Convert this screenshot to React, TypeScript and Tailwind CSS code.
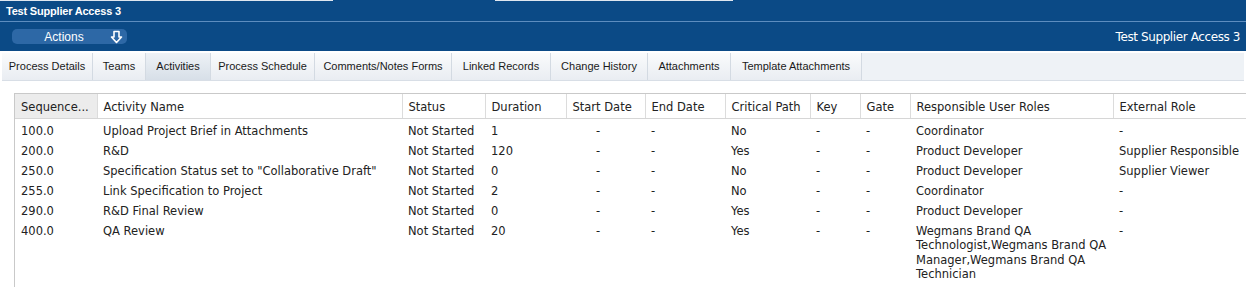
const tabs: [string, number][] = [
  ["Process Details", 91],
  ["Teams", 53],
  ["Activities", 65],
  ["Process Schedule", 104],
  ["Comments/Notes Forms", 137],
  ["Linked Records", 99],
  ["Change History", 97],
  ["Attachments", 83],
  ["Template Attachments", 131],
];

const rows = [
  ["100.0", "Upload Project Brief in Attachments", "Not Started", "1", "-", "-", "No", "-", "-", "Coordinator", "-"],
  ["200.0", "R&D", "Not Started", "120", "-", "-", "Yes", "-", "-", "Product Developer", "Supplier Responsible"],
  ["250.0", 'Specification Status set to "Collaborative Draft"', "Not Started", "0", "-", "-", "No", "-", "-", "Product Developer", "Supplier Viewer"],
  ["255.0", "Link Specification to Project", "Not Started", "2", "-", "-", "No", "-", "-", "Coordinator", "-"],
  ["290.0", "R&D Final Review", "Not Started", "0", "-", "-", "Yes", "-", "-", "Product Developer", "-"],
  ["400.0", "QA Review", "Not Started", "20", "-", "-", "Yes", "-", "-", "Wegmans Brand QA Technologist,Wegmans Brand QA Manager,Wegmans Brand QA Technician", "-"],
];

const headers = [
  "Sequence...",
  "Activity Name",
  "Status",
  "Duration",
  "Start Date",
  "End Date",
  "Critical Path",
  "Key",
  "Gate",
  "Responsible User Roles",
  "External Role",
];

const widths = [82, 305, 83, 81, 79, 80, 85, 50, 50, 203, 148];

// hollow block arrow used on the Actions button
const DownArrow = () => (
  <svg width="13" height="14" viewBox="0 0 13 14" className="mr-[4px]">
    <path
      d="M4 1.5 H9 V7 H11.5 L6.5 12.5 L1.5 7 H4 Z"
      fill="none"
      stroke="white"
      strokeWidth="1.6"
      strokeLinejoin="round"
    />
  </svg>
);

export default function App() {
  return (
    <div className="w-[1246px] h-[287px] overflow-hidden bg-white font-['Liberation_Sans',Arial,sans-serif]">
      {/* top strip */}
      <div className="flex h-px bg-[#0b4a86]">
        <div className="w-[333px] bg-[#dfe7f0]" />
        <div className="w-[162px]" />
        <div className="w-[238px] bg-[#dfe7f0]" />
      </div>
      <div className="h-[20px] bg-[#0b4a86] flex items-center px-[6px] text-white text-[11px] font-bold tracking-[-0.2px]">
        Test Supplier Access 3
      </div>
      <div className="h-px bg-[#5d8dbf]" />
      <div className="h-[29px] bg-[#0b4a86] flex items-center justify-between pl-[12px] pr-[6px]">
        <div className="w-[115px] h-[15px] rounded-[5px] bg-[#2d68a6] flex items-center text-white text-[12px]">
          <span className="flex-1 text-center pl-[6px]">Actions</span>
          <DownArrow />
        </div>
        <span className="text-white text-[12px] font-['DejaVu_Sans',sans-serif] tracking-[-0.4px]">
          Test Supplier Access 3
        </span>
      </div>
      <div className="h-[2px]" />
      <div className="mx-[2px] h-[28px] flex bg-[#eef2f6] border-b border-[#d8dee6]">
        {tabs.map(([t, w]) => (
          <div
            key={t}
            style={{ width: w }}
            className={
              "flex items-center justify-center text-[11px] text-[#1a1a1a] border-r border-[#d3dae2] " +
              (t === "Activities"
                ? "bg-gradient-to-b from-[#eef2f6] to-[#d7dfe8]"
                : "bg-gradient-to-b from-[#fafbfc] to-[#e9edf2]")
            }
          >
            {t}
          </div>
        ))}
      </div>
      <div className="h-[12px]" />
      <div className="ml-[14px] border-l border-t border-[#c9c9c9] h-[200px] font-['DejaVu_Sans',sans-serif] text-[11.5px] text-[#222]">
        <table className="table-fixed border-collapse w-[1246px]">
          <colgroup>
            {widths.map((w, i) => (
              <col key={i} style={{ width: w }} />
            ))}
          </colgroup>
          <thead>
            <tr className="h-[24px]">
              {headers.map((h, i) => (
                <th
                  key={h}
                  className={
                    "text-left font-normal px-[6px] pt-[4px] whitespace-nowrap overflow-hidden border-b border-[#d6d6d6] " +
                    (i > 0 ? "border-l border-l-[#dcdcdc] " : "") +
                    (i === 0 ? "bg-[#ececec]" : "bg-white")
                  }
                >
                  {h}
                </th>
              ))}
            </tr>
          </thead>
          <tbody>
            {rows.map((r, ri) => (
              <tr key={ri} className="align-top">
                {r.map((c, ci) => (
                  <td
                    key={ci}
                    className={
                      "px-[6px] leading-[14.5px] " +
                      (ri === 0 ? "pt-[5px] " : "pt-[5.6px] ") +
                      (ci === 4 ? "pl-[30px] " : "") +
                      (ci === 9 ? "whitespace-normal" : "whitespace-nowrap")
                    }
                  >
                    {c}
                  </td>
                ))}
              </tr>
            ))}
          </tbody>
        </table>
      </div>
    </div>
  );
}
